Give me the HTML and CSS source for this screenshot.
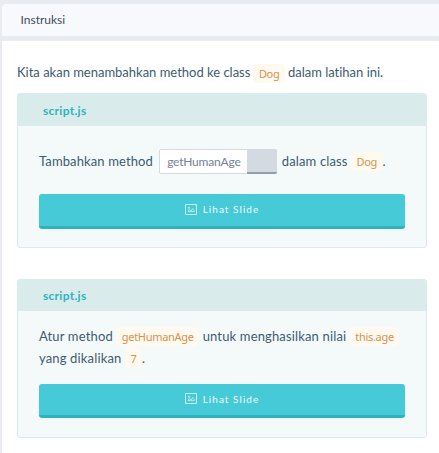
FILE: index.html
```html
<!DOCTYPE html>
<html lang="id">
<head>
<meta charset="utf-8">
<title>Instruksi</title>
<link rel="stylesheet" href="styles.css">
</head>
<body>
<svg class="defs" width="0" height="0">
  <symbol id="picture" viewBox="0 0 12 11">
    <path d="M.5.5h11v10H.5z" fill="none" stroke="currentColor"/>
    <path d="M3 7.6h6.5V6.8L7.7 4.6 6 7.1 4.4 5.8 3 7z M3 3.5h1.5v.8H3" fill="none" stroke="currentColor" stroke-width=".8"/>
  </symbol>
</svg>
<header class="panel-title">Instruksi</header>
<main class="panel">
  <p class="intro">Kita akan menambahkan method ke class <code>Dog</code> dalam latihan ini.</p>
  <section class="card first">
    <h2>script.js</h2>
    <div class="content">
      <p class="task single">Tambahkan method <span class="snippet"><span class="value">getHumanAge</span><span class="copy"></span></span> dalam class <code>Dog</code>.</p>
      <button class="slide"><svg><use href="#picture"/></svg>Lihat Slide</button>
    </div>
  </section>
  <section class="card second">
    <h2>script.js</h2>
    <div class="content">
      <p class="task">Atur method <code>getHumanAge</code> untuk menghasilkan nilai <code>this.age</code> yang dikalikan <code>7</code>.</p>
      <button class="slide"><svg><use href="#picture"/></svg>Lihat Slide</button>
    </div>
  </section>
</main>
</body>
</html>
```
FILE: styles.css
```css
* { box-sizing: border-box; }
body {
  margin: 0;
  padding: 4px 0 0 2px;
  height: 453px;
  overflow: hidden;
  background: #e8ecf0;
  color: #3d5b73;
  font: 13px/22px Lato, sans-serif;
}
.defs { position: absolute; }
.panel-title {
  height: 32px;
  padding-left: 18.5px;
  border-radius: 4px 0 0 0;
  background: #f8f9fd;
  color: #414c5c;
  font-size: 12px;
  line-height: 32px;
}
.panel {
  height: 412px;
  margin-top: 5px;
  padding: 20px 12px 0 15px;
  background: #fff;
}
p, h2 { margin: 0; }
.intro { height: 32px; letter-spacing: -.01px; white-space: nowrap; }
code {
  display: inline-block;
  height: 19px;
  padding: 0 5.5px;
  border-radius: 4px;
  background: #fff9ef;
  color: #d39350;
  font: 11px/19px "Noto Sans", sans-serif;
  letter-spacing: -.3px;
}
.intro code { position: relative; top: 1px; margin: 0 -.3px; }
.card {
  border: 1px solid #d9ebea;
  border-radius: 3px;
  background: #f4faf9;
}
.card h2 {
  height: 32px;
  padding-left: 25px;
  background: #d9ebea;
  color: #2fb3bf;
  font-size: 12px;
  font-weight: 700;
  letter-spacing: .28px;
  line-height: 34px;
}
.first { height: 155px; }
.second { height: 159px; margin-top: 31px; }
.card.second h2 { height: 31px; line-height: 32px; }
.content { padding: 0 21px; }
.task { height: 73px; padding-top: 14px; letter-spacing: .15px; }
.single { height: 68px; padding-top: 24px; letter-spacing: .12px; white-space: nowrap; }
.snippet {
  display: inline-flex;
  width: 118px;
  height: 25px;
  margin: -1px 1.3px 1px 2.7px;
  border: 1px solid #d3dae2;
  border-radius: 2px;
  background: #fff;
  color: #748197;
  font-size: 12px;
  letter-spacing: -.2px;
  line-height: 24px;
  vertical-align: middle;
}
.value { width: 87px; padding-left: 7px; }
.copy {
  flex: 1;
  margin: -1px;
  margin-left: 0;
  border-bottom: 2px solid #929eb0;
  border-radius: 0 2px 2px 0;
  background: #d3dae2;
}
.slide {
  display: flex;
  align-items: center;
  justify-content: center;
  gap: 6px;
  width: 100%;
  height: 35px;
  padding: 0 0 1px;
  border: 0;
  border-bottom: 3px solid #2cb3bf;
  border-radius: 3px;
  background: #46cad7;
  color: #effbfc;
  font: 10px/14px Lato, sans-serif;
  letter-spacing: 1.05px;
}
.first .slide { padding-bottom: 2px; }
.second .slide { height: 34px; padding-bottom: 2px; }
.slide svg { width: 12px; height: 11px; opacity: .8; }
```
